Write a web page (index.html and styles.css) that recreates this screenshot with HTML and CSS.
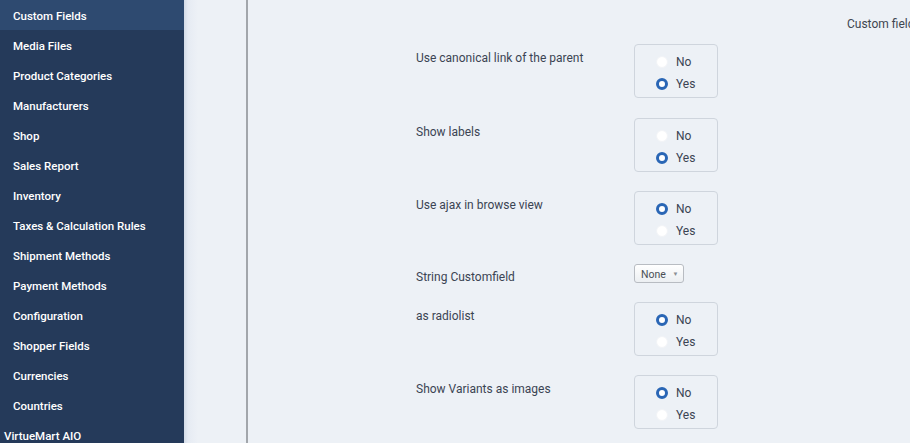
FILE: index.html
```html
<!DOCTYPE html>
<html>
<head>
<meta charset="utf-8">
<link rel="stylesheet" href="styles.css">
</head>
<body>
<div class="page">
  <nav class="sidebar">
    <a class="item active">Custom Fields</a>
    <a class="item">Media Files</a>
    <a class="item">Product Categories</a>
    <a class="item">Manufacturers</a>
    <a class="item">Shop</a>
    <a class="item">Sales Report</a>
    <a class="item">Inventory</a>
    <a class="item">Taxes &amp; Calculation Rules</a>
    <a class="item">Shipment Methods</a>
    <a class="item">Payment Methods</a>
    <a class="item">Configuration</a>
    <a class="item">Shopper Fields</a>
    <a class="item">Currencies</a>
    <a class="item">Countries</a>
    <a class="item group">VirtueMart AIO</a>
  </nav>
  <div class="gutter"></div>
  <main class="main">
    <div class="topnote">Custom field</div>
    <div class="form">
      <div class="row r1">
        <div class="label">Use canonical link of the parent</div>
        <div class="radios">
          <label class="opt"><span class="radio"></span>No</label>
          <label class="opt"><span class="radio on"></span>Yes</label>
        </div>
      </div>
      <div class="row">
        <div class="label">Show labels</div>
        <div class="radios">
          <label class="opt"><span class="radio"></span>No</label>
          <label class="opt"><span class="radio on"></span>Yes</label>
        </div>
      </div>
      <div class="row">
        <div class="label">Use ajax in browse view</div>
        <div class="radios">
          <label class="opt"><span class="radio on"></span>No</label>
          <label class="opt"><span class="radio"></span>Yes</label>
        </div>
      </div>
      <div class="row sel-row">
        <div class="label sel-label">String Customfield</div>
        <div class="select">None <span class="caret">&#9660;</span></div>
      </div>
      <div class="row">
        <div class="label">as radiolist</div>
        <div class="radios">
          <label class="opt"><span class="radio on"></span>No</label>
          <label class="opt"><span class="radio"></span>Yes</label>
        </div>
      </div>
      <div class="row">
        <div class="label">Show Variants as images</div>
        <div class="radios">
          <label class="opt"><span class="radio on"></span>No</label>
          <label class="opt"><span class="radio"></span>Yes</label>
        </div>
      </div>
    </div>
  </main>
</div>
</body>
</html>
```

FILE: styles.css
```css
html, body {
  margin: 0;
  padding: 0;
  height: 443px;
  overflow: hidden;
}
body {
  font-family: Roboto, "Liberation Sans", Arial, sans-serif;
  background: #edf1f6;
}
.page {
  display: flex;
  height: 443px;
}
.sidebar {
  width: 184px;
  flex: none;
  background: #253a5a;
  display: flex;
  flex-direction: column;
}
.item {
  display: block;
  height: 30px;
  line-height: 32px;
  padding-left: 13px;
  color: #ffffff;
  font-size: 11.5px;
  font-weight: 500;
  white-space: nowrap;
}
.item.active {
  background: #2e4a70;
}
.item.group {
  padding-left: 4px;
}
.gutter {
  width: 62px;
  flex: none;
  background: linear-gradient(to right, #d3dbe7 0px, #e6ebf3 4px, #edf1f6 14px);
  border-right: 2px solid #a2a6ab;
}
.main {
  flex: 1;
  min-width: 0;
  padding-left: 168px;
}
.topnote {
  height: 0;
  position: relative;
  left: 431px;
  top: 17px;
  font-size: 12px;
  color: #404650;
  white-space: nowrap;
}
.form {
  padding-top: 44px;
  display: flex;
  flex-direction: column;
  gap: 19px;
}
.row {
  display: flex;
  align-items: flex-start;
}
.row.r1 {
  margin-bottom: 1px;
}
.label {
  width: 218px;
  flex: none;
  font-size: 12px;
  color: #3b4453;
  padding-top: 7px;
  line-height: 14px;
}
.sel-row {
  margin-bottom: -1px;
}
.sel-label {
  padding-top: 6px;
}
.radios {
  width: 82px;
  border: 1px solid #cfd5dd;
  border-radius: 4px;
  box-sizing: content-box;
  display: flex;
  flex-direction: column;
  padding-top: 6px;
  height: 46px;
}
.opt {
  display: flex;
  align-items: center;
  height: 22px;
  padding-left: 21px;
  font-size: 12px;
  color: #3b4453;
}
.radio {
  width: 12px;
  height: 12px;
  border-radius: 50%;
  background: #ffffff;
  box-sizing: border-box;
  margin-right: 8px;
  border: 1px solid #f2f4f7;
}
.radio.on {
  border: 3.5px solid #2a66b5;
}
.select {
  height: 17px;
  border: 1px solid #b8bcc2;
  border-radius: 3px;
  background: linear-gradient(#ffffff, #eceff2);
  font-size: 10.5px;
  color: #4a4f56;
  line-height: 17px;
  padding-left: 6px;
  box-sizing: content-box;
  width: 42px;
  white-space: nowrap;
}
.caret {
  font-size: 6px;
  color: #8a8e94;
  margin-left: 4px;
  vertical-align: 2px;
}
```
